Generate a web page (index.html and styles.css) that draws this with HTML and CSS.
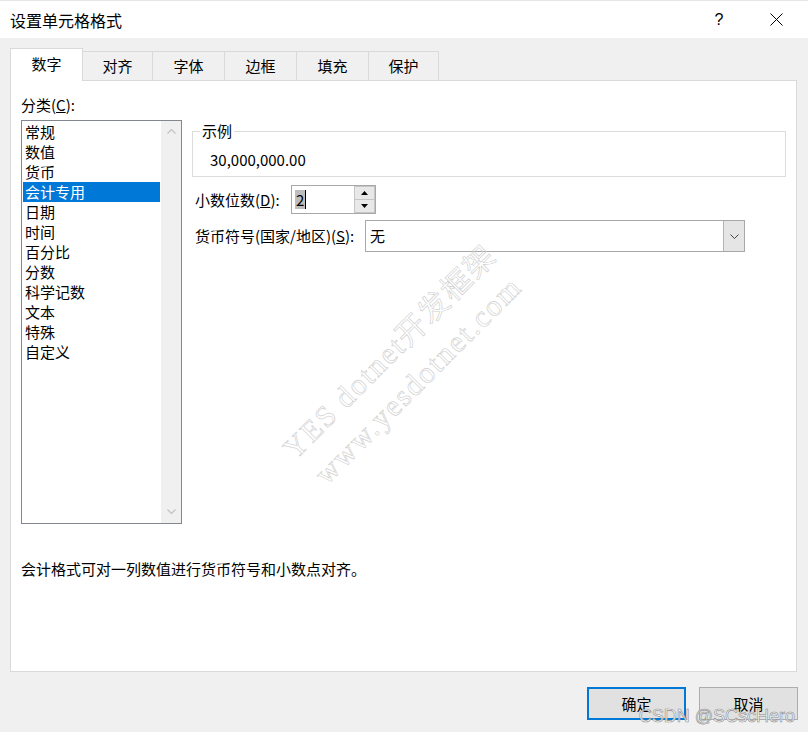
FILE: index.html
```html
<!DOCTYPE html>
<html lang="zh-CN">
<head>
<meta charset="utf-8">
<title>设置单元格格式</title>
<link rel="stylesheet" href="styles.css">
</head>
<body>
<div class="window">
  <div class="titlebar">
    <div class="title">设置单元格格式</div>
    <div class="cap-btn help">?</div>
    <div class="cap-btn close">
      <svg width="13" height="13" viewBox="0 0 13 13"><path d="M0.5 0.5 L12.5 12.5 M12.5 0.5 L0.5 12.5" stroke="#000" stroke-width="1" fill="none"/></svg>
    </div>
  </div>

  <div class="tabs">
    <div class="tab active narrow">数字</div>
    <div class="tab narrow">对齐</div>
    <div class="tab wide">字体</div>
    <div class="tab wide">边框</div>
    <div class="tab wide">填充</div>
    <div class="tab narrow">保护</div>
  </div>

  <div class="panel">
    <div class="panel-body">
      <div class="left-col">
        <div class="label">分类(<u>C</u>):</div>
        <div class="listbox">
          <ul class="items">
            <li>常规</li>
            <li>数值</li>
            <li>货币</li>
            <li class="selected">会计专用</li>
            <li>日期</li>
            <li>时间</li>
            <li>百分比</li>
            <li>分数</li>
            <li>科学记数</li>
            <li>文本</li>
            <li>特殊</li>
            <li>自定义</li>
          </ul>
          <div class="vscroll">
            <svg width="9" height="5" viewBox="0 0 9 5"><polyline points="0.5,4.5 4.5,0.5 8.5,4.5" fill="none" stroke="#c2c2c2" stroke-width="1.2"/></svg>
            <svg width="9" height="5" viewBox="0 0 9 5"><polyline points="0.5,0.5 4.5,4.5 8.5,0.5" fill="none" stroke="#c2c2c2" stroke-width="1.2"/></svg>
          </div>
        </div>
      </div>

      <div class="right-col">
        <fieldset class="sample">
          <legend>示例</legend>
          <div class="sample-value">30,000,000.00</div>
        </fieldset>

        <div class="field-row">
          <div class="field-label w-decimals">小数位数(<u>D</u>):</div>
          <div class="spinner">
            <div class="spin-text"><span class="sel">2</span><span class="caret"></span></div>
            <div class="spin-btns">
              <div class="spin-btn"><svg width="7" height="4" viewBox="0 0 7 4"><polygon points="0,4 3.5,0 7,4" fill="#000"/></svg></div>
              <div class="spin-btn"><svg width="7" height="4" viewBox="0 0 7 4"><polygon points="0,0 3.5,4 7,0" fill="#000"/></svg></div>
            </div>
          </div>
        </div>

        <div class="field-row row-currency">
          <div class="field-label w-currency">货币符号(国家/地区)(<u>S</u>):</div>
          <div class="combo">
            <div class="combo-text">无</div>
            <div class="combo-btn"><svg width="9" height="5" viewBox="0 0 9 5"><polyline points="0.5,0.5 4.5,4.5 8.5,0.5" fill="none" stroke="#444" stroke-width="1"/></svg></div>
          </div>
        </div>
      </div>
    </div>

    <div class="description">会计格式可对一列数值进行货币符号和小数点对齐。</div>

    <div class="watermark">
      <div>YES dotnet开发框架</div>
      <div>www.yesdotnet.com</div>
    </div>
  </div>

  <div class="buttons">
    <div class="btn default">确定</div>
    <div class="btn">取消</div>
  </div>

  <div class="csdn">CSDN @SCscHero</div>
</div>
</body>
</html>
```

FILE: styles.css
```css
* { box-sizing: border-box; }
html, body { margin: 0; padding: 0; }
body {
  width: 808px;
  height: 732px;
  overflow: hidden;
  background: #f0f0f0;
  font-family: "Noto Sans CJK SC", "Microsoft YaHei", sans-serif;
  font-size: 15px;
  color: #000;
}
.window { position: relative; width: 808px; height: 732px; }

/* title bar */
.titlebar {
  height: 38px;
  background: #fff;
  border-top: 1px solid #e6e6e6;
  display: flex;
  align-items: center;
}
.title { flex: 1; padding-left: 10px; font-size: 16px; line-height: 20px; }
.cap-btn { height: 37px; display: flex; align-items: center; justify-content: center; }
.help { width: 50px; font-family: "Liberation Sans", sans-serif; font-size: 16px; }
.close { width: 64px; }

/* tabs */
.tabs {
  height: 42px;
  padding-left: 10px;
  display: flex;
  align-items: flex-end;
}
.tab {
  height: 29px;
  margin-left: -1px;
  border: 1px solid #d9d9d9;
  border-bottom: none;
  background: #f0f0f0;
  display: flex;
  align-items: center;
  justify-content: center;
  line-height: 20px;
}
.tab.narrow { width: 71px; }
.tab.wide { width: 73px; }
.tab.active {
  width: 73px;
  height: 33px;
  margin-left: 0;
  margin-bottom: -1px;
  background: #fff;
  position: relative;
  z-index: 2;
  padding-bottom: 2px;
}

/* panel */
.panel {
  position: relative;
  margin-left: 10px;
  width: 787px;
  height: 592px;
  background: #fff;
  border: 1px solid #d9d9d9;
  padding: 14px 10px 0 10px;
  overflow: hidden;
}
.panel-body { display: flex; }
.left-col { width: 161px; flex: none; }
.label { height: 20px; line-height: 20px; }
.listbox {
  margin-top: 5px;
  height: 404px;
  border: 1px solid #828790;
  display: flex;
}
.items { flex: 1; list-style: none; margin: 0; padding: 1px; }
.items li { height: 20px; line-height: 20px; padding-left: 2px; white-space: nowrap; }
.items li.selected { background: #0078d7; color: #fff; }
.vscroll {
  width: 20px;
  background: #f0f0f0;
  display: flex;
  flex-direction: column;
  justify-content: space-between;
  align-items: center;
  padding: 8px 0 9px;
}

.right-col { margin-left: 10px; margin-top: 26px; width: 594px; flex: none; }
.sample {
  margin: 0;
  padding: 0 18px 6px;
  border: 1px solid #dcdcdc;
  min-width: 0;
}
.sample legend { padding: 0 2px; margin-left: -11px; line-height: 20px; }
.sample-value { padding-top: 9px; line-height: 20px; margin-left: -1px; }

.field-row { display: flex; align-items: center; margin-top: 8px; }
.row-currency { margin-top: 6px; }
.field-label { flex: none; padding-left: 3px; line-height: 20px; white-space: nowrap; }
.w-decimals { width: 99px; }
.w-currency { width: 173px; }

.spinner {
  width: 85px;
  height: 29px;
  border: 1px solid #a8a8a8;
  background: #fff;
  display: flex;
}
.spin-text { flex: 1; display: flex; align-items: center; padding-left: 3px; }
.sel { background: #bdbdbd; line-height: 19px; height: 19px; padding: 0 1px; }
.caret { width: 1px; height: 19px; background: #000; }
.spin-btns { width: 21px; display: flex; flex-direction: column; }
.spin-btn {
  flex: 1;
  background: #e8e8e8;
  border: 1px solid #c6c6c6;
  display: flex;
  align-items: center;
  justify-content: center;
}
.spin-btn + .spin-btn { border-top: none; }

.combo {
  width: 380px;
  height: 32px;
  border: 1px solid #a8a8a8;
  background: #fff;
  display: flex;
}
.combo-text { flex: 1; padding-left: 4px; line-height: 30px; }
.combo-btn {
  width: 21px;
  background: #e5e5e5;
  border-left: 1px solid #b4b4b4;
  display: flex;
  align-items: center;
  justify-content: center;
}

.description { margin-top: 35px; line-height: 20px; }

.watermark {
  position: absolute;
  left: 223px;
  top: 245px;
  width: 340px;
  text-align: center;
  transform: rotate(-45deg);
  font-family: "Liberation Serif", "Noto Sans CJK SC", serif;
  font-size: 30px;
  line-height: 40px;
  letter-spacing: 2px;
  white-space: nowrap;
  color: transparent;
  -webkit-text-stroke: 0.6px #cdcdcd;
  pointer-events: none;
}

/* buttons */
.buttons {
  margin-top: 15px;
  padding-right: 10px;
  display: flex;
  justify-content: flex-end;
  gap: 13px;
}
.btn {
  width: 99px;
  height: 33px;
  background: #e1e1e1;
  border: 1px solid #adadad;
  display: flex;
  align-items: center;
  justify-content: center;
  line-height: 20px;
}
.btn.default { border: 2px solid #0078d7; }

.csdn {
  position: absolute;
  right: 13px;
  bottom: 5px;
  font-family: "Liberation Sans", sans-serif;
  font-size: 18px;
  line-height: 22px;
  color: rgba(255, 255, 255, 0.85);
  -webkit-text-stroke: 0.6px #8c8c8c;
  pointer-events: none;
}
```
